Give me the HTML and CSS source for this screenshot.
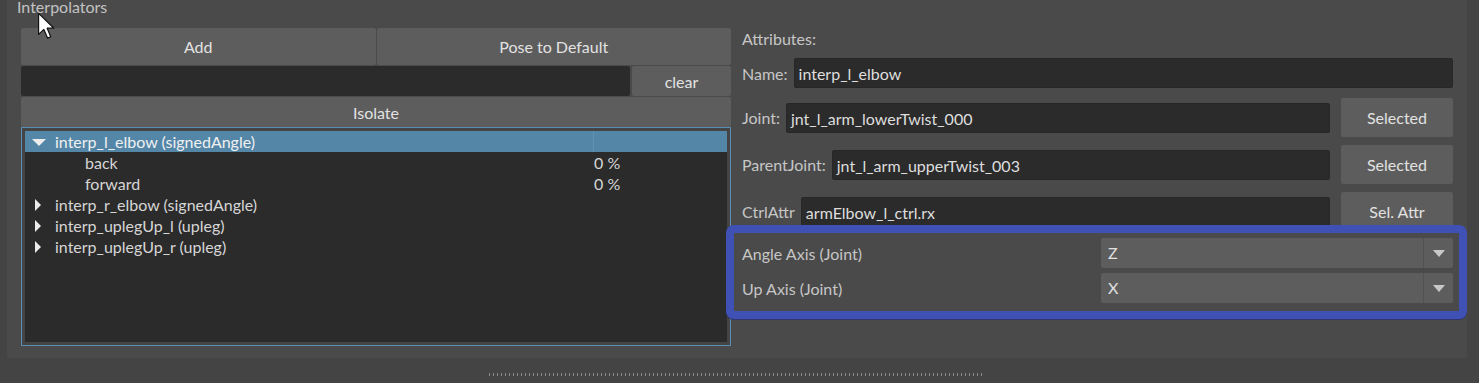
FILE: index.html
```html
<!DOCTYPE html>
<html lang="en">
  <head>
    <meta charset="UTF-8" />
    <meta name="viewport" content="width=device-width, initial-scale=1.0" />
    <title>Interpolators</title>
    <link rel="stylesheet" href="styles.css">
  </head>
  <body>
    <div class="panel">
      <div class="panel-title">Interpolators</div>
      <div class="panel-body">
        <div class="left">
          <div class="btn-row">
            <div class="btn">Add</div>
            <div class="btn">Pose to Default</div>
          </div>
          <div class="filter-row">
            <div class="field"></div>
            <div class="btn clear">clear</div>
          </div>
          <div class="btn isolate">Isolate</div>
          <div class="tree">
            <div class="tree-inner">
              <div class="row selected">
                <span class="toggle"><span class="arrow-down"></span></span>
                <span class="name">interp_l_elbow (signedAngle)</span>
                <span class="val"></span>
              </div>
              <div class="row child">
                <span class="name">back</span>
                <span class="val">0 %</span>
              </div>
              <div class="row child">
                <span class="name">forward</span>
                <span class="val">0 %</span>
              </div>
              <div class="row">
                <span class="toggle"><span class="arrow-right"></span></span>
                <span class="name">interp_r_elbow (signedAngle)</span>
                <span class="val"></span>
              </div>
              <div class="row">
                <span class="toggle"><span class="arrow-right"></span></span>
                <span class="name">interp_uplegUp_l (upleg)</span>
                <span class="val"></span>
              </div>
              <div class="row">
                <span class="toggle"><span class="arrow-right"></span></span>
                <span class="name">interp_uplegUp_r (upleg)</span>
                <span class="val"></span>
              </div>
            </div>
          </div>
        </div>

        <div class="right">
          <div class="attr-title">Attributes:</div>
          <div class="form-row name-row">
            <span class="label">Name:</span>
            <div class="input">interp_l_elbow</div>
          </div>
          <div class="form-row">
            <span class="label">Joint:</span>
            <div class="input">jnt_l_arm_lowerTwist_000</div>
            <div class="btn side-btn">Selected</div>
          </div>
          <div class="form-row">
            <span class="label">ParentJoint:</span>
            <div class="input">jnt_l_arm_upperTwist_003</div>
            <div class="btn side-btn">Selected</div>
          </div>
          <div class="form-row">
            <span class="label">CtrlAttr</span>
            <div class="input">armElbow_l_ctrl.rx</div>
            <div class="btn side-btn">Sel. Attr</div>
          </div>
          <div class="highlight">
            <div class="combo-row">
              <span class="label">Angle Axis (Joint)</span>
              <div class="combo"><span class="combo-text">Z</span><span class="combo-arrow"></span></div>
            </div>
            <div class="combo-row">
              <span class="label">Up Axis (Joint)</span>
              <div class="combo"><span class="combo-text">X</span><span class="combo-arrow"></span></div>
            </div>
          </div>
        </div>
      </div>
    </div>
    <div class="splitter"></div>

    <svg class="cursor" width="19" height="29" viewBox="0 0 14 22">
      <path d="M1 1 L1 17 L5 13.2 L7.8 19.8 L10.2 18.8 L7.5 12.3 L12.6 12.3 Z" fill="#fff" stroke="#111" stroke-width="0.9" stroke-linejoin="round"/>
    </svg>
  </body>
</html>
```

FILE: styles.css
```css
body {
  margin: 0;
  height: 383px;
  overflow: hidden;
  background-color: #444444;
  font-family: Lato, "Open Sans", sans-serif;
  font-size: 16px;
  color: #d8d8d8;
  position: relative;
}
.panel {
  margin: -5px 12px 0 7px;
  padding: 2px 14px 12px 14px;
  background-color: #4a4a4a;
}
.panel-title {
  height: 20px;
  line-height: 20px;
  margin-left: -4px;
  margin-bottom: 11px;
  color: #c2c2c2;
}
.panel-body {
  display: flex;
  gap: 6px;
}
.btn {
  background-color: #5d5d5d;
  color: #e2e2e2;
  border-radius: 2px;
  display: flex;
  align-items: center;
  justify-content: center;
  box-sizing: border-box;
}

/* left column */
.left {
  width: 710px;
  display: flex;
  flex-direction: column;
}
.btn-row {
  display: flex;
  gap: 1px;
  height: 37px;
}
.btn-row .btn {
  flex: 1;
}
.filter-row {
  display: flex;
  gap: 2px;
  height: 30px;
  margin-top: 1px;
}
.field {
  flex: 1;
  background-color: #2b2b2b;
  border-radius: 2px;
}
.clear {
  width: 99px;
}
.isolate {
  height: 30px;
  margin-top: 1px;
}
.tree {
  height: 219px;
  box-sizing: border-box;
  border: 1px solid #5b8db0;
  padding: 3px;
  background-color: #444444;
}
.tree-inner {
  height: 100%;
  background-color: #2b2b2b;
}
.row {
  height: 21px;
  display: flex;
  align-items: center;
  color: #d6d6d6;
}
.row .toggle {
  width: 30px;
  display: flex;
  align-items: center;
}
.row .name {
  width: 538px;
}
.row.child .name {
  width: 508px;
  padding-left: 60px;
}
.row .val {
  flex: 1;
  align-self: stretch;
  display: flex;
  align-items: center;
  padding-left: 1px;
}
.row.selected {
  background-color: #5486a8;
  color: #f0f0f0;
}
.row.selected .val {
  border-left: 1px solid #6391b0;
}
.arrow-down {
  margin-left: 7px;
  margin-top: 1px;
  width: 0;
  height: 0;
  border-left: 7px solid transparent;
  border-right: 7px solid transparent;
  border-top: 7px solid #ececec;
}
.arrow-right {
  margin-left: 10px;
  width: 0;
  height: 0;
  border-top: 6px solid transparent;
  border-bottom: 6px solid transparent;
  border-left: 6px solid #ececec;
}

/* right column */
.right {
  flex: 1;
  display: flex;
  flex-direction: column;
}
.label {
  color: #c6c6c6;
  white-space: nowrap;
}
.attr-title {
  height: 22px;
  line-height: 22px;
  padding-left: 5px;
  margin-bottom: 8px;
  color: #c6c6c6;
}
.form-row {
  display: flex;
  align-items: center;
  height: 39px;
  padding-left: 5px;
  gap: 6px;
  margin-top: 8px;
}
.form-row.name-row {
  height: 30px;
  margin-top: 0;
  margin-bottom: 2px;
}
.input {
  flex: 1;
  height: 30px;
  line-height: 30px;
  box-sizing: border-box;
  padding-left: 4px;
  background-color: #2b2b2b;
  border: 1px solid #272727;
  border-radius: 2px;
  color: #dedede;
}
.side-btn {
  width: 112px;
  height: 39px;
  margin-left: 5px;
}
.highlight {
  margin: -6px -14px 0 -11px;
  border: 8px solid #3f51b5;
  border-radius: 8px;
  padding: 5px 6px 8px 8px;
  background-color: #4a4a4a;
  box-shadow: 0 1px 0 #2f3670;
  display: flex;
  flex-direction: column;
  gap: 5px;
}
.combo-row {
  display: flex;
  align-items: center;
  height: 30px;
}
.combo-row .label {
  flex: 1;
}
.combo {
  width: 352px;
  height: 30px;
  display: flex;
  background-color: #5d5d5d;
  border-radius: 2px;
}
.combo-text {
  flex: 1;
  line-height: 30px;
  padding-left: 7px;
  color: #e0e0e0;
}
.combo-arrow {
  width: 29px;
  border-left: 1px solid #525252;
  display: flex;
  align-items: center;
  justify-content: center;
}
.combo-arrow::after {
  content: "";
  border-left: 6px solid transparent;
  border-right: 6px solid transparent;
  border-top: 7px solid #c8c8c8;
}

.splitter {
  width: 494px;
  height: 3px;
  margin: 15px 0 0 489px;
  background: repeating-linear-gradient(90deg, #8c8c8c 0 1px, transparent 1px 4px);
}
.cursor {
  position: absolute;
  left: 37px;
  top: 12px;
}
```
